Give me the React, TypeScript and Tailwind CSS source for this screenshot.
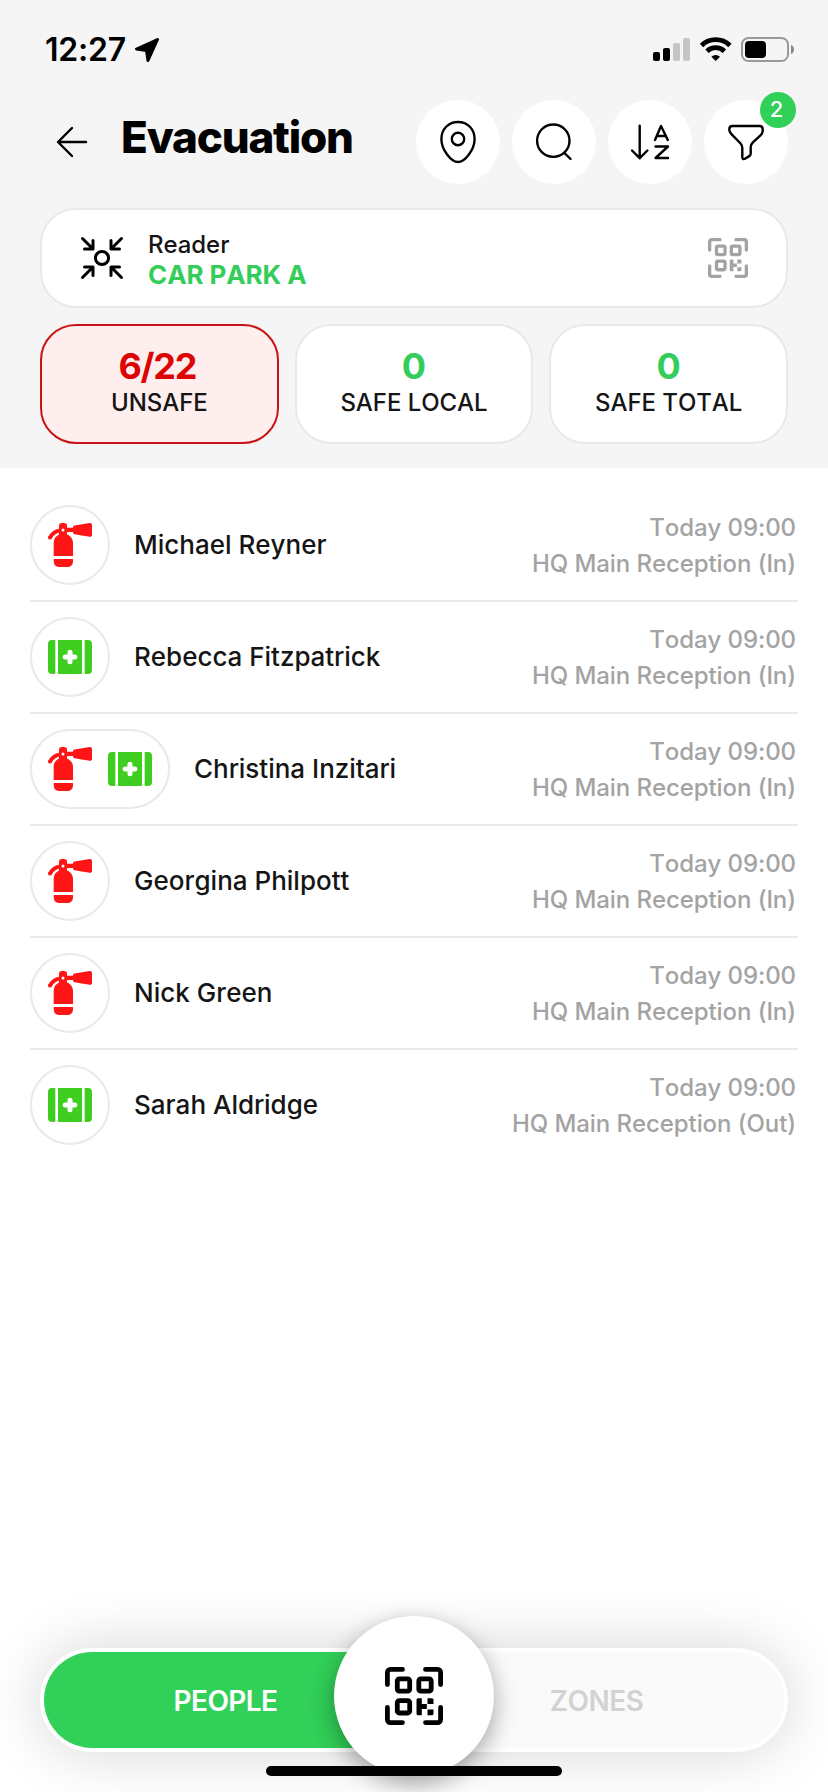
import type { ReactNode } from "react";

type Role = "fire" | "aid";

const STATS = [
  { label: "UNSAFE", value: "6/22", active: true },
  { label: "SAFE LOCAL", value: "0", active: false },
  { label: "SAFE TOTAL", value: "0", active: false },
];

const PEOPLE: { name: string; roles: Role[]; place: string }[] = [
  { name: "Michael Reyner", roles: ["fire"], place: "HQ Main Reception (In)" },
  { name: "Rebecca Fitzpatrick", roles: ["aid"], place: "HQ Main Reception (In)" },
  { name: "Christina Inzitari", roles: ["fire", "aid"], place: "HQ Main Reception (In)" },
  { name: "Georgina Philpott", roles: ["fire"], place: "HQ Main Reception (In)" },
  { name: "Nick Green", roles: ["fire"], place: "HQ Main Reception (In)" },
  { name: "Sarah Aldridge", roles: ["aid"], place: "HQ Main Reception (Out)" },
];

function FireIcon() {
  return (
    <svg className="size-11" viewBox="0 0 44 44" fill="#ff1515">
      <path d="M11 3a3 3 0 0 1 3-3h2a3 3 0 0 1 3 3v8.500c3.600 1.400 6 4.600 6 8.500v13H5.700V20c0-3.900 2-7 5.300-8.500Z" />
      <path d="M5.700 36H25v2.500a5.500 5.500 0 0 1-5.500 5.500h-8.300a5.500 5.500 0 0 1-5.500-5.500Z" />
      <path d="M18 4.700h7V4.300c0-1 .6-1.500 1.500-1.700L41.500.1C43 0 44 .8 44 2v10c0 1.300-1 2-2.400 1.800l-15.100-2.600c-.9-.2-1.500-.8-1.500-1.700V9h-7Z" />
      <path d="M2 14.500C4.200 10.500 7.800 8 12.500 7.500" fill="none" stroke="#ff1515" strokeLinecap="round" strokeWidth="4" />
      <circle cx="15" cy="7" r="1.500" fill="#fff" />
    </svg>
  );
}

function AidIcon() {
  return (
    <svg className="size-11" viewBox="0 0 44 44" fill="#3fce20">
      <path d="M7.300 5v34H4a4 4 0 0 1-4-4V9a4 4 0 0 1 4-4Z" />
      <path d="M10 5h24v34H10Z" />
      <path d="M36.700 5H40a4 4 0 0 1 4 4v26a4 4 0 0 1-4 4h-3.300Z" />
      <path d="M22 17.200v9.600M17.200 22h9.600" stroke="#fff" strokeLinecap="round" strokeWidth="5" />
    </svg>
  );
}

function QrIcon({ className }: { className: string }) {
  return (
    <svg className={className} viewBox="0 0 58 58" fill="none" stroke="currentColor" strokeWidth="4.800">
      <path
        d="M2.400 17.500V5.400a3 3 0 0 1 3-3H17.500M40.500 2.400h12.100a3 3 0 0 1 3 3V17.500M55.600 40.500v12.100a3 3 0 0 1-3 3H40.500M17.500 55.600H5.400a3 3 0 0 1-3-3V40.500"
        strokeLinecap="round"
      />
      <rect x="12.300" y="11.800" width="12.400" height="12.400" rx="2" />
      <rect x="33.800" y="11.800" width="12.400" height="12.400" rx="2" />
      <rect x="12.300" y="33.600" width="12.400" height="12.400" rx="2" />
      <path
        d="M33 31.300h3.800v5.700h5v5h-5v6.300H33a1.500 1.500 0 0 1-1.500-1.500v-14a1.500 1.500 0 0 1 1.500-1.500ZM42.500 31.300H47a1.500 1.500 0 0 1 1.500 1.500V37h-6ZM42.500 42.500h6v4.300a1.500 1.500 0 0 1-1.500 1.500h-4.500Z"
        fill="currentColor"
        stroke="none"
      />
    </svg>
  );
}

function StatusBar() {
  return (
    <div className="flex h-[100px] items-start justify-between pl-[45px] pr-[33px] pt-[30px]">
      <div className="flex h-10 items-center gap-[9px]">
        <span className="text-[32px] font-semibold leading-10 tracking-[-0.200px]">12:27</span>
        <svg className="h-6 w-6" viewBox="0 0 24 24">
          <path d="M22.500 1.500 1.500 11 11.500 12.500 13 22.500Z" stroke="#000" strokeLinejoin="round" strokeWidth="3" />
        </svg>
      </div>
      <svg className="h-10 w-[142px]" viewBox="653 30 142 40">
        <rect x="653" y="52" width="7" height="9" rx="2" />
        <rect x="663" y="48" width="7" height="13" rx="2" />
        <rect x="673" y="43" width="7" height="18" rx="2" fill="#c5c5c5" />
        <rect x="683" y="38" width="7" height="23" rx="2" fill="#c5c5c5" />
        <path
          d="M701.500 45.500a20.300 20.300 0 0 1 28.400 0M707 51.200a12.500 12.500 0 0 1 17.400 0"
          fill="none"
          stroke="#000"
          strokeWidth="4.800"
        />
        <path d="M715.700 61l-4.300-4.300a6.200 6.200 0 0 1 8.600 0Z" />
        <rect x="742" y="38" width="46" height="23" rx="6.500" fill="none" stroke="#999" strokeWidth="2" />
        <rect x="745" y="41" width="21" height="17" rx="4" />
        <path d="M791 45c4 1.500 4 7.500 0 9Z" fill="#888" />
      </svg>
    </div>
  );
}

function RoundButton({ label, children }: { label: string; children: ReactNode }) {
  return (
    <button aria-label={label} className="size-[84px] rounded-full bg-white" type="button">
      <svg
        className="size-[84px]"
        viewBox="0 0 84 84"
        fill="none"
        stroke="#000"
        strokeLinecap="round"
        strokeLinejoin="round"
        strokeWidth="2.400"
      >
        {children}
      </svg>
    </button>
  );
}

export default function App() {
  return (
    <div className="flex h-[1792px] w-[828px] flex-col overflow-hidden bg-white font-['Inter',sans-serif] font-[450] text-black [font-kerning:none]">
      <header className="h-[468px] bg-[#f5f5f5]">
        <StatusBar />

        <div className="flex h-[84px] items-center px-10">
          <button aria-label="Back" className="ml-4 size-8" type="button">
            <svg
              className="size-8"
              viewBox="0 0 32 32"
              fill="none"
              stroke="#000"
              strokeLinecap="round"
              strokeLinejoin="round"
              strokeWidth="2.400"
            >
              <path d="M30 16H2M16 2 2 16l14 14" />
            </svg>
          </button>
          <h1 className="mb-[10px] ml-[33px] text-[44px] font-extrabold leading-[52px] tracking-[-1.200px] [font-kerning:normal]">
            Evacuation
          </h1>
          <div className="ml-auto flex gap-3">
            <RoundButton label="Locations">
              <path d="M42 22c-9.500 0-16.600 7-16.600 17.200C25.400 50 35.500 62 42 62s16.600-12 16.600-22.800C58.600 29 51.500 22 42 22Z" />
              <circle cx="42" cy="39" r="6.200" />
            </RoundButton>
            <RoundButton label="Search">
              <circle cx="41.300" cy="40.700" r="16.200" />
              <path d="m52.500 53 6 6" />
            </RoundButton>
            <RoundButton label="Sort">
              <path d="M31.700 25.700v32.500M24 50.500l7.700 7.700 7.700-7.700" />
              <path d="M47 40l6-14 6.800 14M49.500 36h8.500M47.500 46.500H60L47.500 58H60" />
            </RoundButton>
            <div className="relative size-[84px]">
              <RoundButton label="Filter">
                <path d="M28.500 26h27c2 0 3.200 1.200 3.200 3.200v1.500c0 1.800-.8 3.300-2 4.500l-8 7.500c-1.300 1.200-2 2.600-2 4.400v6.400c0 1.200-.5 2-1.500 2.600l-4.300 2.700c-1.500.8-2.600 0-2.600-1.600V48c0-1.700-.5-3.200-1.700-4.500l-9.400-9.700c-1.200-1.200-1.900-2.300-1.900-4v-.6c0-2 1.200-3.200 3.200-3.200Z" />
              </RoundButton>
              <span className="absolute -right-2 -top-2 flex size-9 items-center justify-center rounded-full bg-[#31d058] pb-[2px] pr-[3px] text-[22px] text-white">
                2
              </span>
            </div>
          </div>
        </div>

        <div className="mx-10 mt-6 flex h-[100px] items-center rounded-[36px] border-2 border-[#e9e9e9] bg-white pl-[38px] pr-[38px]">
          <svg
            className="size-11"
            viewBox="0 0 44 44"
            fill="none"
            stroke="#000"
            strokeLinecap="round"
            strokeLinejoin="round"
            strokeWidth="3"
          >
            <path d="m2.500 2.500 10.500 10.500M13 4.500V13H4.500" />
            <path d="M41.500 2.500 31 13M31 4.500V13h8.500" />
            <path d="m2.500 41.500 10.500-10.500M13 39.500V31H4.500" />
            <path d="M41.500 41.500 31 31M31 39.500V31h8.500" />
            <circle cx="22" cy="22" r="6.600" />
          </svg>
          <div className="ml-6 flex flex-col pt-1 text-[#151515]">
            <span className="text-[24px] leading-[30px]">Reader</span>
            <span className="text-[26px] font-bold leading-[30px] tracking-[-0.100px] text-[#34cd5b]">CAR PARK A</span>
          </div>
          <QrIcon className="ml-auto size-10 text-[#a3a3a3]" />
        </div>

        <div className="mx-10 mt-4 grid grid-cols-3 gap-4">
          {STATS.map((stat) => (
            <div
              className={
                stat.active
                  ? "flex h-[120px] flex-col items-center rounded-[36px] border-2 border-[#c91414] bg-[#ffeeee] pt-5"
                  : "flex h-[120px] flex-col items-center rounded-[36px] border-2 border-[#e9e9e9] bg-white pt-5"
              }
              key={stat.label}
            >
              <span
                className={
                  stat.active
                    ? "pr-1 text-[36px] font-bold leading-[41px] tracking-[-1.200px] text-[#dc0505]"
                    : "text-[36px] font-bold leading-[41px] text-[#34cd5b]"
                }
              >
                {stat.value}
              </span>
              <span className="text-[24px] leading-8 tracking-[-0.050px] text-[#151515]">{stat.label}</span>
            </div>
          ))}
        </div>
      </header>

      <main className="flex-1 px-[30px] pt-[22px]">
        {PEOPLE.map((person) => (
          <div
            className="flex h-[112px] items-center border-b-2 border-[#e9e9e9] last:border-transparent"
            key={person.name}
          >
            <div className="flex h-20 items-center gap-4 rounded-full border-2 border-[#e9e9e9] px-4">
              {person.roles.map((role) => (role === "fire" ? <FireIcon key={role} /> : <AidIcon key={role} />))}
            </div>
            <span className="ml-6 text-[26px] leading-8 text-[#151515]">{person.name}</span>
            <div className="ml-auto pr-[2px] pt-[2px] text-right text-[24px] leading-9 tracking-[-0.080px] text-[#a3a3a3]">
              <p>Today 09:00</p>
              <p>{person.place}</p>
            </div>
          </div>
        ))}
      </main>

      <footer className="relative h-[144px] px-10">
        <div className="flex h-[104px] overflow-hidden rounded-full border-4 border-white bg-[#fafafa] shadow-[0_0_60px_rgba(0,0,0,0.17)]">
          <button className="flex-1 bg-[#31d058] pr-[8px] pt-[2px] text-[28px] font-semibold tracking-[-0.600px] text-white" type="button">
            PEOPLE
          </button>
          <button className="flex-1 pr-[6px] pt-[2px] text-[28px] font-semibold tracking-[-0.500px] text-[#d2d2d2]" type="button">
            ZONES
          </button>
        </div>
        <button
          aria-label="Scan code"
          className="absolute -top-8 left-[334px] flex size-40 items-center justify-center rounded-full bg-white shadow-[0_8px_24px_rgba(0,0,0,0.35)]"
          type="button"
        >
          <QrIcon className="size-[58px] text-black" />
        </button>
        <div className="absolute left-[266px] top-[118px] h-[10px] w-[296px] rounded-full bg-black" />
      </footer>
    </div>
  );
}
